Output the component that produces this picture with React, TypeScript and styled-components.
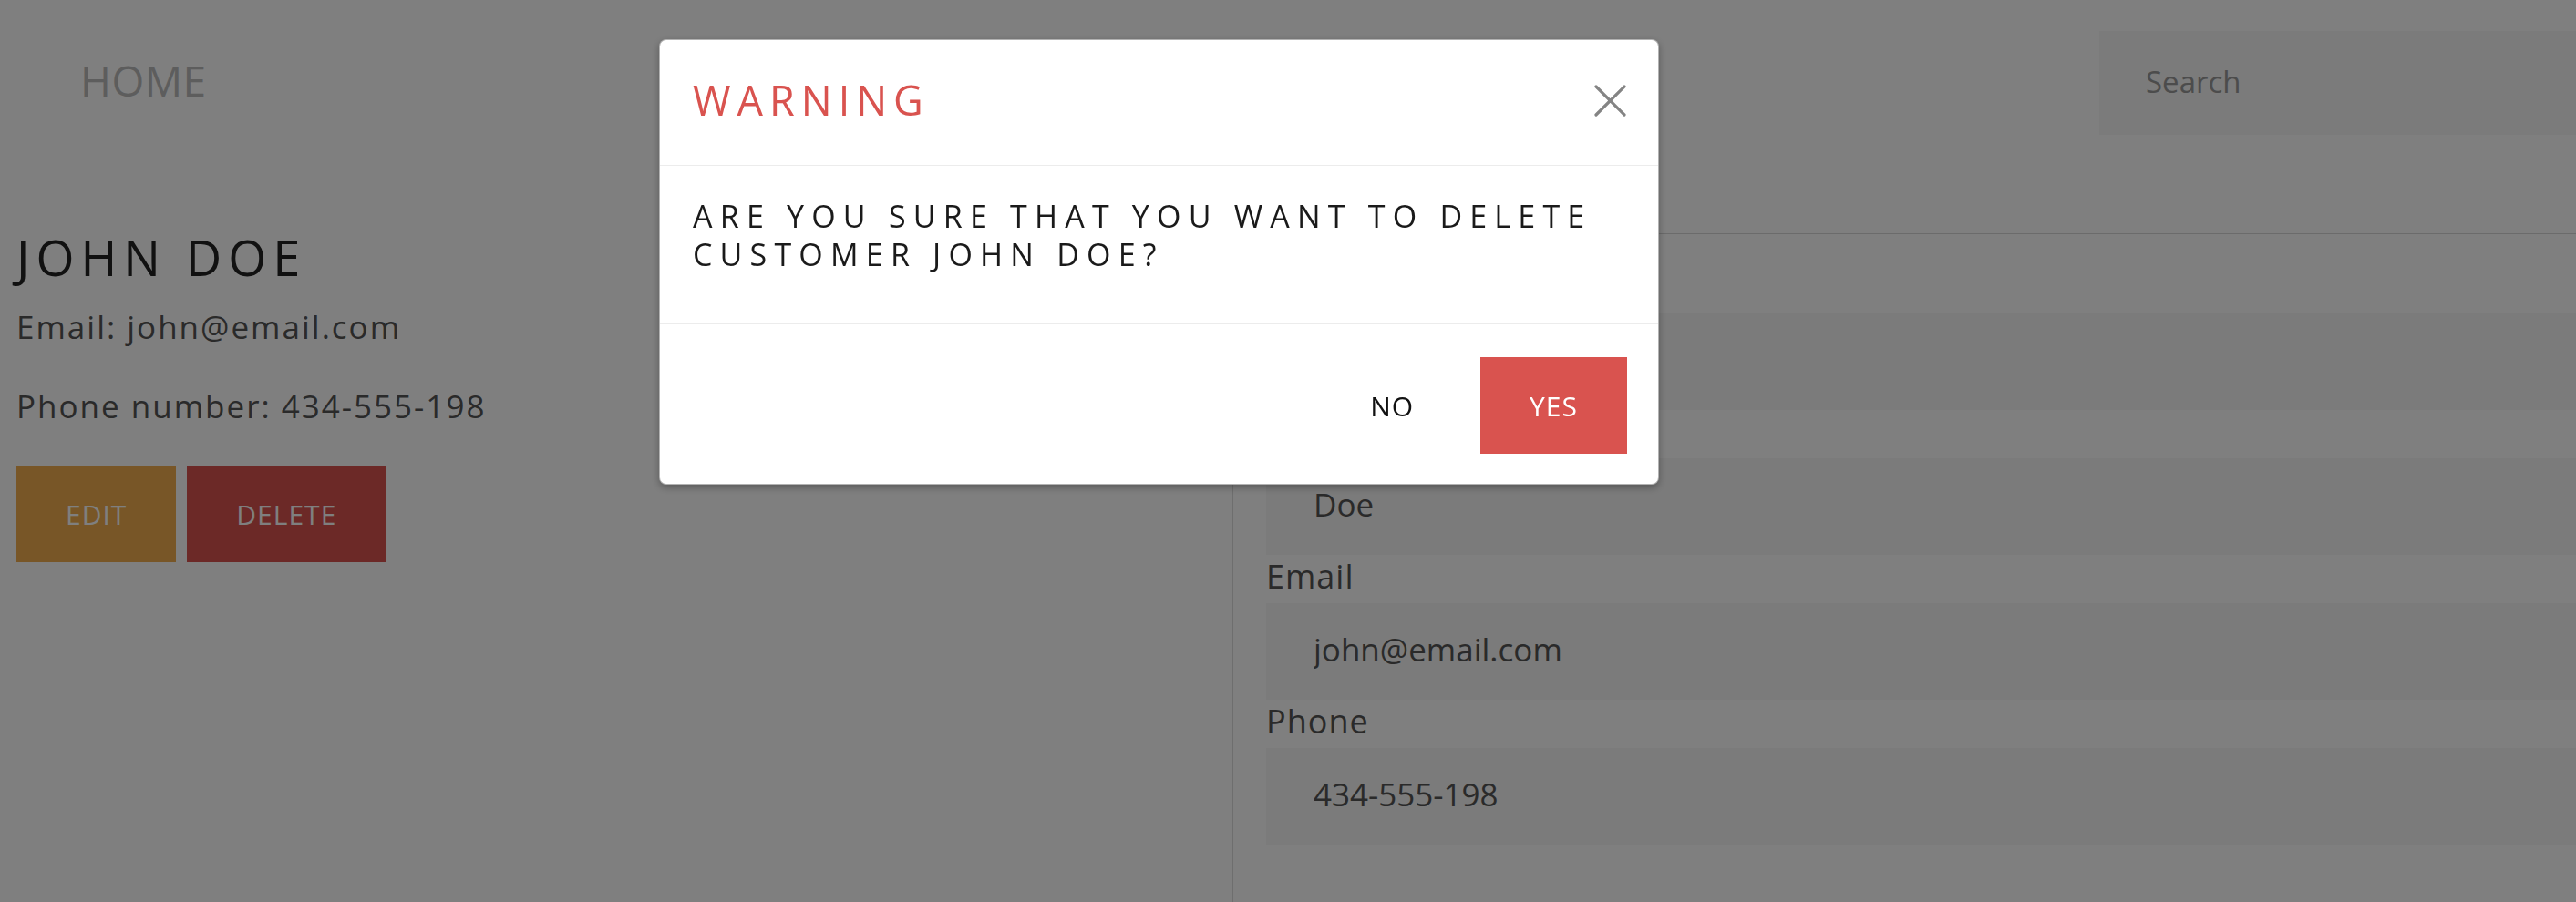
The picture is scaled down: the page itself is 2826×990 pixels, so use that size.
import React from "react";
import styled, { createGlobalStyle } from "styled-components";

const GlobalStyle = createGlobalStyle`
  *, *::before, *::after { box-sizing: border-box; }
  html, body { margin: 0; padding: 0; }
  body {
    background: #ffffff;
    font-family: "Open Sans", "Noto Sans", sans-serif;
    overflow: hidden;
  }
`;

const FONT = `"Open Sans", "Noto Sans", sans-serif`;

const Page = styled.div`
  min-height: 100vh;
  display: flex;
  flex-direction: column;
`;

const Nav = styled.header`
  height: 182px;
  display: flex;
  align-items: center;
  justify-content: space-between;
  padding-left: 88px;
`;

const HomeLink = styled.a`
  font-size: 46px;
  color: #bbbbbb;
  text-decoration: none;
  margin-bottom: 6px;
  letter-spacing: 0.5px;
`;

const SearchInput = styled.input`
  width: 523px;
  height: 114px;
  border: none;
  outline: none;
  background: #f6f6f6;
  padding: 0 0 3px 51px;
  font-family: ${FONT};
  font-size: 33px;
  color: #555;
  &::placeholder {
    color: #999999;
  }
`;

const Main = styled.main`
  flex: 1;
  display: grid;
  grid-template-columns: 1352px 1fr;
`;

const Details = styled.section`
  padding: 68px 0 0 18px;
`;

const Name = styled.h1`
  margin: 0 0 21px;
  font-size: 54px;
  line-height: 64px;
  font-weight: 500;
  letter-spacing: 7px;
  color: #222222;
`;

const Info = styled.p<{ $gap: number }>`
  margin: 0 0 ${(p) => p.$gap}px;
  font-size: 35px;
  line-height: 48px;
  letter-spacing: 2px;
  color: #555555;
`;

const Actions = styled.div`
  display: flex;
  gap: 12px;
`;

const ActionButton = styled.button<{ $tone: "warning" | "danger" }>`
  height: 105px;
  padding: 0 54px;
  border: none;
  font-family: ${FONT};
  font-size: 30px;
  letter-spacing: 1px;
  color: #ffffff;
  background: ${(p) => (p.$tone === "warning" ? "#f0ad4e" : "#d9534f")};
  cursor: pointer;
`;

const EditorColumn = styled.section`
  border-left: 1px solid #dcdcdc;
  padding: 74px 0 0 36px;
`;

const Form = styled.form`
  display: flex;
  flex-direction: column;
  border-top: 1px solid #d6d6d6;
  border-bottom: 1px solid #d6d6d6;
  padding: 34px 0;
`;

const Label = styled.label`
  height: 53px;
  display: flex;
  align-items: center;
  padding-bottom: 7px;
  font-size: 36px;
  letter-spacing: 1px;
  color: #555555;
`;

const Field = styled.input`
  height: 106px;
  border: none;
  outline: none;
  background: #f6f6f6;
  padding: 0 0 6px 52px;
  font-family: ${FONT};
  font-size: 35px;
  color: #555555;
`;

const Backdrop = styled.div`
  position: fixed;
  inset: 0;
  background: rgba(0, 0, 0, 0.5);
  display: flex;
  align-items: flex-start;
  padding: 43px 0 0 723px;
`;

const Dialog = styled.div`
  width: 1097px;
  background: #ffffff;
  border: 1px solid rgba(0, 0, 0, 0.3);
  border-radius: 8px;
  box-shadow: 0 3px 9px rgba(0, 0, 0, 0.3);
  overflow: hidden;
`;

const DialogHeader = styled.div`
  height: 138px;
  display: flex;
  align-items: center;
  justify-content: space-between;
  padding: 0 35px 0 36px;
  border-bottom: 1px solid #ececec;
`;

const DialogTitle = styled.h2`
  margin: 0 0 6px;
  font-size: 45px;
  font-weight: 400;
  letter-spacing: 7px;
  color: #d9534f;
`;

const CloseButton = styled.button`
  width: 35px;
  height: 35px;
  padding: 0;
  margin-bottom: 4px;
  border: none;
  background: none;
  cursor: pointer;
  display: flex;
`;

const DialogBody = styled.div`
  padding: 34px 36px 55px;
  font-size: 34px;
  font-weight: 500;
  line-height: 42px;
  letter-spacing: 8.2px;
  color: #1a1a1a;
`;

const DialogFooter = styled.div`
  display: flex;
  justify-content: flex-end;
  gap: 19px;
  padding: 36px 34px 33px;
  border-top: 1px solid #ececec;
`;

const DialogButton = styled.button<{ $primary?: boolean }>`
  height: 106px;
  padding: 0 54px;
  border: none;
  font-family: ${FONT};
  font-size: 30px;
  letter-spacing: 1px;
  color: ${(p) => (p.$primary ? "#ffffff" : "#111111")};
  background: ${(p) => (p.$primary ? "#d9534f" : "transparent")};
  cursor: pointer;
`;

const fields = [
  { id: "first", label: "First name", value: "John" },
  { id: "last", label: "Last name", value: "Doe" },
  { id: "email", label: "Email", value: "john@email.com" },
  { id: "phone", label: "Phone", value: "434-555-198" },
];

export default function App() {
  return (
    <>
      <GlobalStyle />
      <Page>
        <Nav>
          <HomeLink href="#">HOME</HomeLink>
          <SearchInput placeholder="Search" />
        </Nav>
        <Main>
          <Details>
            <Name>JOHN DOE</Name>
            <Info $gap={39}>Email: john@email.com</Info>
            <Info $gap={42}>Phone number: 434-555-198</Info>
            <Actions>
              <ActionButton $tone="warning">EDIT</ActionButton>
              <ActionButton $tone="danger">DELETE</ActionButton>
            </Actions>
          </Details>
          <EditorColumn>
            <Form onSubmit={(e) => e.preventDefault()}>
              {fields.map((f) => (
                <React.Fragment key={f.id}>
                  <Label htmlFor={f.id}>{f.label}</Label>
                  <Field id={f.id} defaultValue={f.value} />
                </React.Fragment>
              ))}
            </Form>
          </EditorColumn>
        </Main>
      </Page>
      <Backdrop>
        <Dialog role="dialog">
          <DialogHeader>
            <DialogTitle>WARNING</DialogTitle>
            <CloseButton aria-label="Close">
              <svg width="35" height="35" viewBox="0 0 35 35">
                <path
                  d="M2 2 L33 33 M33 2 L2 33"
                  stroke="#848484"
                  strokeWidth="3.2"
                  strokeLinecap="round"
                  fill="none"
                />
              </svg>
            </CloseButton>
          </DialogHeader>
          <DialogBody>ARE YOU SURE THAT YOU WANT TO DELETE CUSTOMER JOHN DOE?</DialogBody>
          <DialogFooter>
            <DialogButton>NO</DialogButton>
            <DialogButton $primary>YES</DialogButton>
          </DialogFooter>
        </Dialog>
      </Backdrop>
    </>
  );
}
